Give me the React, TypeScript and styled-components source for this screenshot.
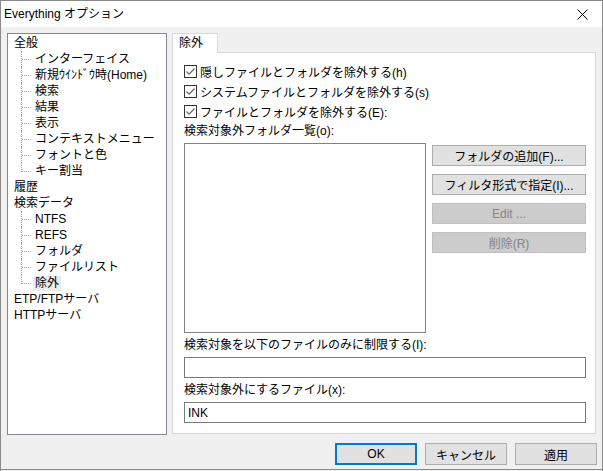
import React from "react";
import styled, { createGlobalStyle } from "styled-components";

const GlobalStyle = createGlobalStyle`
  html, body {
    margin: 0;
    padding: 0;
    background: #f0f0f0;
  }
  * {
    box-sizing: border-box;
  }
  body {
    font-family: "Liberation Sans", "Noto Sans CJK JP", sans-serif;
    font-size: 12px;
    color: #000;
  }
`;

type TreeNode = { label: string; level: number; last?: boolean; selected?: boolean };

const TREE: TreeNode[] = [
  { label: "全般", level: 0 },
  { label: "インターフェイス", level: 1 },
  { label: "新規ｳｲﾝﾄﾞｳ時(Home)", level: 1 },
  { label: "検索", level: 1 },
  { label: "結果", level: 1 },
  { label: "表示", level: 1 },
  { label: "コンテキストメニュー", level: 1 },
  { label: "フォントと色", level: 1 },
  { label: "キー割当", level: 1, last: true },
  { label: "履歴", level: 0 },
  { label: "検索データ", level: 0 },
  { label: "NTFS", level: 1 },
  { label: "REFS", level: 1 },
  { label: "フォルダ", level: 1 },
  { label: "ファイルリスト", level: 1 },
  { label: "除外", level: 1, last: true, selected: true },
  { label: "ETP/FTPサーバ", level: 0 },
  { label: "HTTPサーバ", level: 0 },
];

const CHECKS = [
  "隠しファイルとフォルダを除外する(h)",
  "システムファイルとフォルダを除外する(s)",
  "ファイルとフォルダを除外する(E):",
];

export default function App() {
  return (
    <>
      <GlobalStyle />
      <Window>
        <TitleBar>
          <Title>Everything オプション</Title>
          <CloseButton>
            <svg width="11" height="11" viewBox="0 0 11 11">
              <path d="M0.5 0.5 L10.5 10.5 M10.5 0.5 L0.5 10.5" stroke="#000" strokeWidth="1" fill="none" />
            </svg>
          </CloseButton>
        </TitleBar>

        <Body>
          <Main>
            <Tree>
              {TREE.map((n) => (
                <TreeRow key={n.label} $level={n.level}>
                  {n.level > 0 && <Connector $last={!!n.last} />}
                  <TreeLabel $selected={!!n.selected}>{n.label}</TreeLabel>
                </TreeRow>
              ))}
            </Tree>

            <TabArea>
              <TabStrip>
                <Tab>除外</Tab>
              </TabStrip>
              <Panel>
                {CHECKS.map((c) => (
                  <CheckRow key={c}>
                    <CheckBox>
                      <svg width="11" height="11" viewBox="0 0 11 11">
                        <path d="M1.5 5.5 L4.2 8.2 L9.5 2.5" stroke="#666" strokeWidth="1.2" fill="none" />
                      </svg>
                    </CheckBox>
                    <span>{c}</span>
                  </CheckRow>
                ))}
                <FieldLabel>検索対象外フォルダ一覧(o):</FieldLabel>
                <ListArea>
                  <ListBox />
                  <ButtonColumn>
                    <SideButton>フォルダの追加(F)...</SideButton>
                    <SideButton>フィルタ形式で指定(I)...</SideButton>
                    <SideButton disabled>Edit ...</SideButton>
                    <SideButton disabled>削除(R)</SideButton>
                  </ButtonColumn>
                </ListArea>
                <FieldLabel>検索対象を以下のファイルのみに制限する(I):</FieldLabel>
                <TextInput defaultValue="" />
                <FieldLabel>検索対象外にするファイル(x):</FieldLabel>
                <TextInput defaultValue="INK" />
              </Panel>
            </TabArea>
          </Main>

          <Footer>
            <DialogButton $primary>OK</DialogButton>
            <DialogButton>キャンセル</DialogButton>
            <DialogButton>適用</DialogButton>
          </Footer>
        </Body>
      </Window>
    </>
  );
}

const Window = styled.div`
  width: 603px;
  height: 471px;
  border: 1px solid #8a8a8a;
  border-bottom: none;
  display: flex;
  flex-direction: column;
  background: #f0f0f0;
  overflow: hidden;
`;

const TitleBar = styled.div`
  height: 26px;
  background: #fff;
  display: flex;
  align-items: center;
  justify-content: space-between;
  padding-left: 3px;
`;

const Title = styled.div`
  font-size: 12px;
  line-height: 16px;
  padding-bottom: 1px;
`;

const CloseButton = styled.div`
  width: 46px;
  height: 26px;
  display: flex;
  align-items: center;
  justify-content: center;
  padding-left: 6px;
`;

const Body = styled.div`
  flex: 1;
  display: flex;
  flex-direction: column;
  padding: 6px 5px 0 6px;
  border-bottom: 1px solid #8a8a8a;
  margin-bottom: 1px;
`;

const Main = styled.div`
  display: flex;
  gap: 5px;
  align-items: flex-start;
`;

const Tree = styled.div`
  width: 160px;
  height: 402px;
  background: #fff;
  border: 1px solid #828790;
  padding: 1px 0 0 0;
  display: flex;
  flex-direction: column;
`;

const TreeRow = styled.div<{ $level: number }>`
  height: 16px;
  display: flex;
  align-items: center;
  padding-left: ${({ $level }) => ($level === 0 ? 4 : 13)}px;
  white-space: nowrap;
`;

const Connector = styled.span<{ $last: boolean }>`
  position: relative;
  width: 12px;
  height: 16px;
  flex: none;
  &::before {
    content: "";
    position: absolute;
    left: 0;
    top: 0;
    height: ${({ $last }) => ($last ? 9 : 16)}px;
    border-left: 1px dotted #a0a0a0;
  }
  &::after {
    content: "";
    position: absolute;
    left: 1px;
    top: 8px;
    width: 9px;
    border-top: 1px dotted #a0a0a0;
  }
`;

const TreeLabel = styled.span<{ $selected: boolean }>`
  padding: 0 2px;
  line-height: 15px;
  height: 15px;
  background: ${({ $selected }) => ($selected ? "#ececec" : "transparent")};
`;

const TabArea = styled.div`
  display: flex;
  flex-direction: column;
`;

const TabStrip = styled.div`
  display: flex;
  height: 19px;
  position: relative;
  z-index: 1;
`;

const Tab = styled.div`
  width: 46px;
  height: 20px;
  background: #fff;
  border: 1px solid #d9d9d9;
  border-bottom: none;
  padding: 1px 0 0 6px;
  line-height: 16px;
`;

const Panel = styled.div`
  width: 424px;
  height: 382px;
  background: #fff;
  border: 1px solid #d9d9d9;
  padding: 8px 9px 0 11px;
  display: flex;
  flex-direction: column;
`;

const CheckRow = styled.div`
  height: 20px;
  display: flex;
  align-items: center;
  gap: 3px;
  white-space: nowrap;
`;

const CheckBox = styled.span`
  width: 13px;
  height: 13px;
  border: 1px solid #333;
  background: #fff;
  display: flex;
  align-items: center;
  justify-content: center;
`;

const FieldLabel = styled.div`
  height: 20px;
  line-height: 20px;
  white-space: nowrap;
`;

const ListArea = styled.div`
  display: flex;
  gap: 6px;
  margin-top: 2px;
  margin-bottom: 2px;
`;

const ListBox = styled.div`
  width: 243px;
  height: 190px;
  border: 1px solid #828282;
  background: #fff;
`;

const ButtonColumn = styled.div`
  display: flex;
  flex-direction: column;
  gap: 8px;
  padding-top: 2px;
`;

const SideButton = styled.button`
  width: 154px;
  height: 21px;
  font: inherit;
  font-size: 12px;
  padding: 0;
  background: #e1e1e1;
  border: 1px solid #adadad;
  color: #000;
  &:disabled {
    background: #cccccc;
    border-color: #bfbfbf;
    color: #838383;
  }
`;

const TextInput = styled.input`
  width: 402px;
  height: 21px;
  margin-top: 2px;
  margin-bottom: 2px;
  border: 1px solid #7a7a7a;
  background: #fff;
  font: inherit;
  font-size: 12px;
  padding: 0 3px;
  outline: none;
`;

const Footer = styled.div`
  display: flex;
  justify-content: flex-end;
  gap: 8px;
  margin-top: 8px;
`;

const DialogButton = styled.button<{ $primary?: boolean }>`
  width: 82px;
  height: 22px;
  font: inherit;
  font-size: 12px;
  padding: 0;
  background: #e1e1e1;
  color: #000;
  border: ${({ $primary }) => ($primary ? "2px solid #0078d7" : "1px solid #adadad")};
`;
